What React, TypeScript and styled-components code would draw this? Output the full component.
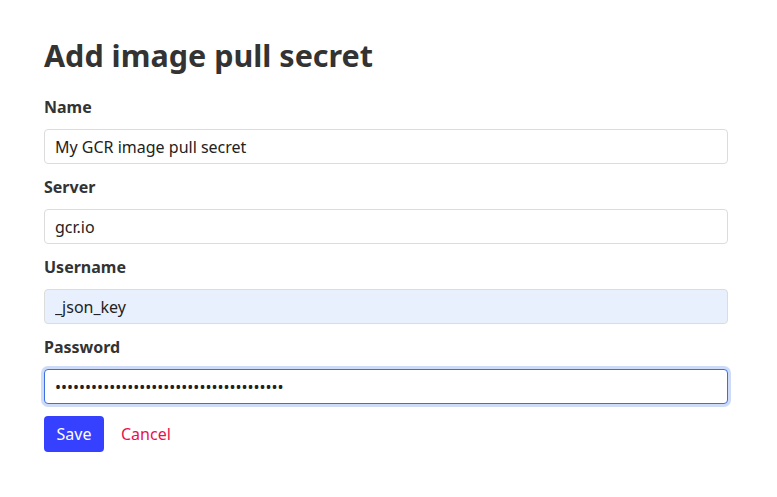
import React from "react";
import styled, { createGlobalStyle } from "styled-components";

const Global = createGlobalStyle`
  html, body { margin: 0; padding: 0; background: #fff; }
  body { font-family: "Noto Sans", "Open Sans", sans-serif; color: #333; }
  * { box-sizing: border-box; }
`;

const Page = styled.div`
  width: 777px;
  padding: 34px 49px 0 44px;
`;

const Title = styled.h1`
  margin: 0 0 20px;
  font-size: 30.5px;
  line-height: 42px;
  font-weight: 700;
  color: #333;
`;

const Form = styled.form`
  display: flex;
  flex-direction: column;
`;

const Field = styled.div`
  display: flex;
  flex-direction: column;
  margin-bottom: 12px;
`;

const Label = styled.label`
  font-size: 16px;
  line-height: 22px;
  font-weight: 700;
  color: #333;
  margin-bottom: 11px;
`;

const Input = styled.input<{ $autofill?: boolean; $focused?: boolean }>`
  width: 684px;
  height: 35px;
  padding: 0 10px;
  font-family: inherit;
  font-size: 16px;
  color: #222;
  caret-color: #111;
  border-radius: 4px;
  outline: none;
  background: ${(p) => (p.$autofill ? "#e8f0fe" : "#fff")};
  border: 1px solid ${(p) => (p.$focused ? "#3d6fe3" : "#dcdcdc")};
  box-shadow: ${(p) => (p.$focused ? "0 0 0 3px rgba(61,111,227,0.25)" : "none")};
`;

const Actions = styled.div`
  display: flex;
  align-items: center;
  gap: 17px;
`;

const SaveButton = styled.button`
  width: 60px;
  height: 36px;
  border: none;
  border-radius: 4px;
  background: #3641ff;
  color: #fff;
  font-family: inherit;
  font-size: 16px;
  cursor: pointer;
`;

const CancelLink = styled.a`
  color: #e8114f;
  font-size: 16px;
  text-decoration: none;
  cursor: pointer;
`;

export default function App() {
  return (
    <>
      <Global />
      <Page>
        <Title>Add image pull secret</Title>
        <Form onSubmit={(e) => e.preventDefault()}>
          <Field>
            <Label>Name</Label>
            <Input defaultValue="My GCR image pull secret" />
          </Field>
          <Field>
            <Label>Server</Label>
            <Input defaultValue="gcr.io" />
          </Field>
          <Field>
            <Label>Username</Label>
            <Input $autofill defaultValue="_json_key" />
          </Field>
          <Field>
            <Label>Password</Label>
            <Input $focused autoFocus type="password" defaultValue={"x".repeat(38)} />
          </Field>
          <Actions>
            <SaveButton type="submit">Save</SaveButton>
            <CancelLink>Cancel</CancelLink>
          </Actions>
        </Form>
      </Page>
    </>
  );
}
